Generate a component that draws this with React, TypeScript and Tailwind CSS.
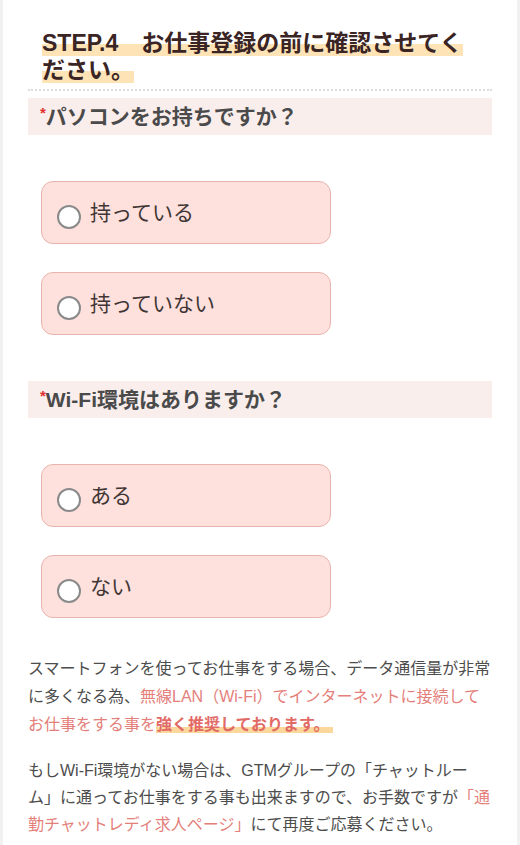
import React from 'react';

const jp = { fontFamily: '"Liberation Sans", "Noto Sans CJK JP", sans-serif' };

function Question({ label }: { label: string }) {
  return (
    <div className="flex h-[37px] items-center bg-[#f9eeec] px-[12px]">
      <span className="relative -top-[3px] text-[15px] font-bold text-[#e0312f]">*</span>
      <span className="text-[21px] font-semibold text-[#4a4a4a]">{label}</span>
    </div>
  );
}

function Option({ label }: { label: string }) {
  return (
    <label className="flex h-[63px] w-[290px] cursor-pointer items-center rounded-[12px] border border-[#e8b4ae] bg-[#fee0dc] pl-[15px]">
      <span className="mt-[9px] h-[24px] w-[24px] shrink-0 rounded-full border-[2px] border-[#8a8a8a] bg-white" />
      <span className="ml-[9px] text-[21px] text-[#3f3535]">{label}</span>
    </label>
  );
}

export default function App() {
  return (
    <div className="min-h-[845px] w-[520px] border-x-[3px] border-[#f1f1f1] bg-white" style={jp}>
      <div className="px-[25px]">
        <h2 className="px-[14px] pt-[30px] text-[23px] font-bold leading-[27px] text-[#3a2424]">
          <span className="bg-[linear-gradient(transparent_55%,#fde3b6_55%)]">
            STEP.4　お仕事登録の前に確認させてください。
          </span>
        </h2>
        <div className="mt-[5px] border-b-[2px] border-dotted border-[#dcdcdc]" />

        <div className="mt-[7px]">
          <Question label="パソコンをお持ちですか？" />
        </div>
        <div className="ml-[13px] mt-[46px] flex flex-col gap-[28px]">
          <Option label="持っている" />
          <Option label="持っていない" />
        </div>

        <div className="mt-[46px]">
          <Question label="Wi-Fi環境はありますか？" />
        </div>
        <div className="ml-[13px] mt-[46px] flex flex-col gap-[28px]">
          <Option label="ある" />
          <Option label="ない" />
        </div>

        <p className="mt-[37px] text-[16px] leading-[28px] text-[#4d4d4d] [text-spacing-trim:space-all]">
          スマートフォンを使ってお仕事をする場合、データ通信量が非常に多くなる為、
          <span className="text-[#e47f7b]">無線LAN（Wi-Fi）でインターネットに接続してお仕事をする事を</span>
          <span className="bg-[linear-gradient(transparent_62%,#fcd79c_62%)] pr-[4px] font-bold text-[#e26a66]">強く推奨しております。</span>
        </p>
        <p className="mt-[18px] text-[16px] leading-[27px] text-[#4d4d4d] [text-spacing-trim:space-all]">
          もしWi-Fi環境がない場合は、GTMグループの「チャットルーム」に通ってお仕事をする事も出来ますので、お手数ですが
          <span className="text-[#e47f7b]">「通勤チャットレディ求人ページ」</span>
          にて再度ご応募ください。
        </p>
      </div>
    </div>
  );
}
